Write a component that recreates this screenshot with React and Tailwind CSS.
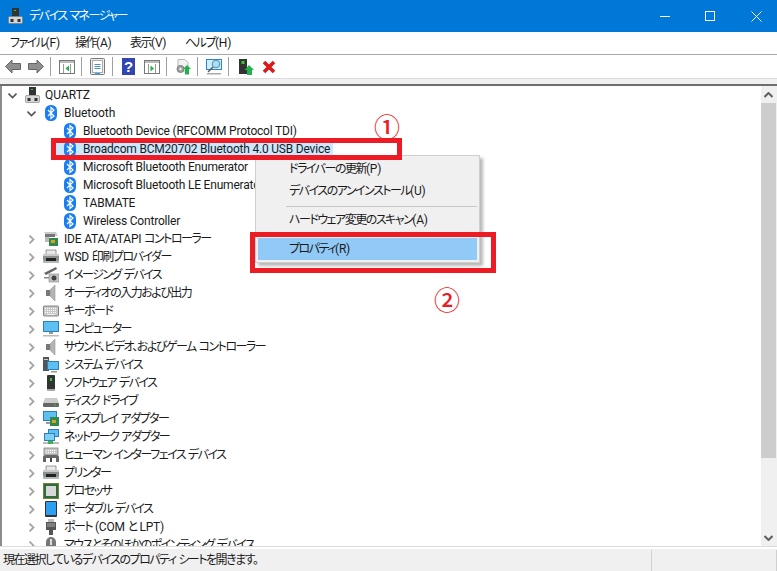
const font = { fontFamily: 'Roboto, "Noto Sans CJK JP", sans-serif' }

// kana and kanji in the reference run narrower than the Latin, so they get their own span
function Label({ text }) {
  const parts = text.split(/([\u3000-\u9fff\uff00-\uffef]+)/)
  return parts.map((p, i) => i % 2
    ? <span key={i} className="tracking-[-1.5px] [font-feature-settings:'palt']">{p}</span>
    : <span key={i} className="tracking-[-0.2px]">{p}</span>)
}

function Chevron({ open }) {
  return (
    <svg width="9" height="9" viewBox="0 0 9 9" className="shrink-0">
      {open
        ? <path d="M0.5 2.5 L4.5 6.5 L8.5 2.5" fill="none" stroke="#555" strokeWidth="1.6" />
        : <path d="M2.5 0.5 L6.5 4.5 L2.5 8.5" fill="none" stroke="#a6a6a6" strokeWidth="1.8" />}
    </svg>
  )
}

function Bt() {
  return (
    <svg width="12" height="16" viewBox="0 0 12 16">
      <rect x="0" y="0" width="12" height="16" rx="5.5" fill="#1a7ef0" />
      <path d="M3 5 L9 11 L6 13.5 V2.5 L9 5 L3 11" fill="none" stroke="#fff" strokeWidth="1.2" />
    </svg>
  )
}

function Computer() {
  return (
    <svg width="15" height="16" viewBox="0 0 15 16">
      <rect x="4" y="0" width="7" height="8" fill="#333" />
      <rect x="6" y="2" width="2" height="1" fill="#3c3" />
      <rect x="0.5" y="8.5" width="14" height="7" rx="1" fill="#d6d6d6" stroke="#777" strokeWidth="0.6" />
      <rect x="2.5" y="11" width="3" height="3" fill="#333" />
      <rect x="9.5" y="11" width="3" height="3" fill="#333" />
    </svg>
  )
}

function DevIcon({ kind }) {
  const box = { width: 16, height: 16, viewBox: '0 0 16 16' }
  switch (kind) {
    case 'ide':
      return <svg {...box}><path d="M1 1 H13 L15 5 H3 Z" fill="#ccc" /><rect x="2" y="3" width="10" height="3" fill="#777" /><rect x="6" y="7" width="9" height="8" fill="#2f8a4e" /><rect x="8" y="9" width="4" height="3" fill="#d9a520" /><rect x="2" y="6" width="4" height="5" fill="#bbb" /></svg>
    case 'printer':
      return <svg {...box}><rect x="3" y="1" width="10" height="5" fill="#e8e8e8" stroke="#777" strokeWidth="0.7" /><rect x="0" y="5" width="16" height="7" rx="1" fill="#8a9090" /><rect x="0" y="5" width="16" height="2" fill="#c8cccc" /><rect x="3" y="9" width="10" height="3" fill="#222" /><rect x="0" y="12" width="16" height="2" fill="#b4b8b8" /></svg>
    case 'camera':
      return <svg {...box}><path d="M1 6 L13 0 L14 2 L3 8 Z" fill="#666" /><rect x="6" y="7" width="10" height="8" fill="#c4c4c4" stroke="#777" strokeWidth="0.5" /><circle cx="11" cy="11" r="2.5" fill="#444" /><rect x="1" y="10" width="5" height="1.5" fill="#888" /></svg>
    case 'speaker':
      return <svg {...box}><rect x="3" y="5" width="4" height="6" fill="#777" /><path d="M7 5 L12 0 V16 L7 11 Z" fill="#b4b4b4" stroke="#888" strokeWidth="0.5" /></svg>
    case 'keyboard':
      return <svg {...box}><rect x="0.5" y="3" width="15" height="10" rx="1" fill="#c8c8c8" stroke="#6a6a6a" strokeWidth="0.8" /><path d="M2 5.5 H14 M2 7.5 H14 M2 9.5 H14" stroke="#fff" strokeWidth="1" strokeDasharray="1 1" /><rect x="4" y="11" width="8" height="1" fill="#f0f0f0" /></svg>
    case 'monitor':
      return <svg {...box}><rect x="0" y="0" width="16" height="11" fill="#2c7fb8" /><rect x="1" y="1" width="14" height="9" fill="#5dc0f0" /><rect x="6" y="11" width="4" height="2" fill="#999" /><rect x="0" y="14" width="16" height="1.5" fill="#bbb" /></svg>
    case 'system':
      return <svg {...box}><rect x="0" y="0" width="6" height="14" fill="#555" /><rect x="1" y="2" width="4" height="1" fill="#ccc" /><rect x="4" y="4" width="12" height="9" fill="#2c7fb8" /><rect x="5" y="5" width="10" height="7" fill="#5dc0f0" /><rect x="8" y="14" width="6" height="1.5" fill="#999" /></svg>
    case 'software':
      return <svg {...box}><rect x="4" y="0" width="8" height="15" rx="1" fill="#333" /><rect x="7" y="3" width="2" height="3" fill="#3c3" /><rect x="4" y="14" width="8" height="2" fill="#aaa" /></svg>
    case 'disk':
      return <svg {...box}><path d="M2 5 H14 L16 10 H0 Z" fill="#ccc" /><rect x="0" y="10" width="16" height="4" rx="1" fill="#666" /><rect x="11" y="11.5" width="2" height="1" fill="#3c3" /></svg>
    case 'display':
      return <svg {...box}><rect x="0" y="0" width="14" height="10" fill="#2c7fb8" /><rect x="1" y="1" width="12" height="8" fill="#5dc0f0" /><rect x="7" y="6" width="9" height="9" fill="#2f8a4e" /><rect x="9" y="9" width="4" height="3" fill="#d9a520" /><rect x="3" y="11" width="4" height="2" fill="#999" /></svg>
    case 'network':
      return <svg {...box}><rect x="5" y="0" width="11" height="8" fill="#2c7fb8" /><rect x="6" y="1" width="9" height="6" fill="#5dc0f0" /><rect x="1" y="4" width="11" height="8" fill="#2c7fb8" /><rect x="2" y="5" width="9" height="6" fill="#7dd0f5" /><rect x="0" y="13" width="16" height="2" fill="#bbb" /><rect x="5" y="12" width="5" height="3" fill="#3bb54a" /></svg>
    case 'hid':
      return <svg {...box}><rect x="1" y="1" width="14" height="7" fill="#c8c8c8" stroke="#777" strokeWidth="0.7" /><path d="M3 3.5 H13 M3 5.5 H13" stroke="#fff" strokeDasharray="1 1" /><path d="M0 15 V10 Q0 8 3 8 H13 Q16 8 16 10 V15 H13 V11 H3 V15 Z" fill="#666" /><rect x="7" y="11" width="2" height="4" fill="#444" /></svg>
    case 'cpu':
      return <svg {...box}><rect x="0" y="0" width="16" height="16" fill="#2f6b3a" /><rect x="0.5" y="0.5" width="15" height="15" fill="none" stroke="#b99a3a" strokeWidth="1" strokeDasharray="1 1" /><rect x="3" y="3" width="10" height="10" fill="#d8d8d8" /></svg>
    case 'portable':
      return <svg {...box}><rect x="2" y="0" width="12" height="16" rx="1" fill="#333" /><rect x="3" y="1" width="10" height="13" fill="#2e9ff0" /></svg>
    case 'port':
      return <svg {...box}><rect x="5" y="0" width="6" height="3" fill="#bbb" /><rect x="3" y="3" width="10" height="8" fill="#555" /><path d="M4 5 H12 M4 7 H12" stroke="#aaa" /><rect x="6" y="11" width="4" height="5" fill="#555" /></svg>
    case 'mouse':
      return <svg {...box}><rect x="3" y="0" width="10" height="16" rx="5" fill="#777" /><rect x="7" y="2" width="2" height="6" fill="#ddd" /></svg>
    default:
      return null
  }
}

const devices = [
  ['ide', 'IDE ATA/ATAPI コントローラー'],
  ['printer', 'WSD 印刷プロバイダー'],
  ['camera', 'イメージング デバイス'],
  ['speaker', 'オーディオの入力および出力'],
  ['keyboard', 'キーボード'],
  ['monitor', 'コンピューター'],
  ['speaker', 'サウンド、ビデオ、およびゲーム コントローラー'],
  ['system', 'システム デバイス'],
  ['software', 'ソフトウェア デバイス'],
  ['disk', 'ディスク ドライブ'],
  ['display', 'ディスプレイ アダプター'],
  ['network', 'ネットワーク アダプター'],
  ['hid', 'ヒューマン インターフェイス デバイス'],
  ['printer', 'プリンター'],
  ['cpu', 'プロセッサ'],
  ['portable', 'ポータブル デバイス'],
  ['port', 'ポート (COM と LPT)'],
  ['mouse', 'マウスとそのほかのポインティング デバイス'],
]

const bluetooth = [
  'Bluetooth Device (RFCOMM Protocol TDI)',
  'Broadcom BCM20702 Bluetooth 4.0 USB Device',
  'Microsoft Bluetooth Enumerator',
  'Microsoft Bluetooth LE Enumerator',
  'TABMATE',
  'Wireless Controller',
]

function Sep({ className }) {
  return <div className={`w-px h-[19px] bg-[#a0a0a0] shrink-0 ${className}`} />
}

function Toolbar() {
  const win = { width: 16, height: 14, viewBox: '0 0 16 14' }
  return (
    <div className="h-[23px] bg-white flex items-center pl-[5px] shrink-0">
      <svg width="16" height="15" viewBox="0 0 16 15"><path d="M0.5 7.5 L7 1 V4.5 H15.5 V10.5 H7 V14 Z" fill="#8f8f8f" stroke="#666" /></svg>
      <svg width="16" height="15" viewBox="0 0 16 15" className="ml-[7px]"><path d="M15.5 7.5 L9 1 V4.5 H0.5 V10.5 H9 V14 Z" fill="#8f8f8f" stroke="#666" /></svg>
      <Sep className="ml-[6px]" />
      <svg {...win} className="ml-[8px]"><rect x="0.5" y="0.5" width="15" height="13" fill="#fff" stroke="#777" /><rect x="1" y="1" width="14" height="2" fill="#bbb" /><path d="M4.5 4 V13 M11.5 4 V13" stroke="#999" /><path d="M10 5.5 L6.5 8.5 L10 11.5 Z" fill="#2aa84a" /></svg>
      <Sep className="ml-[6px]" />
      <svg width="15" height="17" viewBox="0 0 15 17" className="ml-[8px]"><rect x="0.5" y="0.5" width="14" height="16" rx="1" fill="#eee" stroke="#777" /><rect x="2.5" y="2.5" width="10" height="12" fill="#fff" stroke="#aaa" /><path d="M4.5 6.5 H10.5 M4.5 8.5 H10.5 M4.5 10.5 H10.5" stroke="#4a90c0" /><rect x="5" y="15" width="5" height="1.5" fill="#3aa0e8" /></svg>
      <Sep className="ml-[7px]" />
      <svg width="13" height="17" viewBox="0 0 13 17" className="ml-[9px]">
        <rect width="13" height="17" fill="#3346b0" />
        <text x="6.5" y="14" textAnchor="middle" fontSize="15" fontWeight="700" fill="#fff" fontFamily="Liberation Sans">?</text>
      </svg>
      <svg {...win} className="ml-[9px]"><rect x="0.5" y="0.5" width="15" height="13" fill="#fff" stroke="#777" /><rect x="1" y="1" width="14" height="2" fill="#bbb" /><path d="M4.5 4 V13 M11.5 4 V13" stroke="#999" /><path d="M6.5 5.5 L10 8.5 L6.5 11.5 Z" fill="#2aa84a" /></svg>
      <Sep className="ml-[6px]" />
      <svg width="16" height="16" viewBox="0 0 16 16" className="ml-[8px]"><path d="M3 0.5 H10 L13 3.5 V12 H3 Z" fill="#f2f2f2" stroke="#b5b5b5" /><circle cx="5.5" cy="10" r="3.5" fill="#a0a0a0" stroke="#808080" /><circle cx="5.5" cy="10" r="1.2" fill="#eee" /><path d="M12 6 L16 10 H14 V15.5 H10 V10 H8 Z" fill="#22b14c" /></svg>
      <Sep className="ml-[6px]" />
      <svg width="16" height="16" viewBox="0 0 16 16" className="ml-[8px]"><rect x="0" y="0" width="16" height="11" fill="#2c88c8" /><rect x="1" y="1" width="14" height="9" fill="#cfeefc" /><circle cx="10" cy="5" r="3.8" fill="#a8def8" stroke="#5f8aa0" /><path d="M7 8 L2 13" stroke="#555" strokeWidth="1.5" /><rect x="1" y="14" width="14" height="1.5" fill="#aaa" /></svg>
      <Sep className="ml-[6px]" />
      <svg width="16" height="16" viewBox="0 0 16 16" className="ml-[10px]"><rect x="0" y="0" width="8" height="15" fill="#333" /><rect x="2.5" y="2" width="3" height="3" fill="#3c3" /><path d="M10 6 L15 11 H13 V16 H8 V11 H5.5 Z" fill="#22b14c" /></svg>
      <svg width="14" height="14" viewBox="0 0 14 14" className="ml-[7px]"><path d="M2 2 L12 12 M12 2 L2 12" stroke="#d91a1a" strokeWidth="3.6" /></svg>
    </div>
  )
}

function Row({ indent, chevron, icon, selected, children }) {
  return (
    <div className="h-[18px] flex items-center shrink-0 whitespace-nowrap" style={{ paddingLeft: indent }}>
      <span className="w-[19px] flex items-center justify-start pl-[3px] shrink-0">{chevron}</span>
      <div className={`flex items-center h-[18px] ${selected ? 'bg-[#cce8ff] -ml-[6px] pl-[6px] pr-[3px]' : ''}`}>
        <span className="w-[16px] flex items-center justify-center shrink-0">{icon}</span>
        {children}
      </div>
    </div>
  )
}

function ContextMenu() {
  return (
    <div className="absolute left-[255px] top-[155px] w-[225px] h-[108px] bg-[#f0f0f0] border border-[#cfcfcf] shadow-[3px_3px_3px_rgba(0,0,0,0.28)] text-[12px] text-[#1a1a1a]">
      <div className="absolute left-[33px] top-[2px] h-[22px] flex items-center whitespace-nowrap"><Label text="ドライバーの更新(P)" /></div>
      <div className="absolute left-[33px] top-[24px] h-[22px] flex items-center whitespace-nowrap"><Label text="デバイスのアンインストール(U)" /></div>
      <div className="absolute left-[30px] right-[2px] top-[50px] h-px bg-[#c8c8c8]" />
      <div className="absolute left-[33px] top-[53px] h-[22px] flex items-center whitespace-nowrap"><Label text="ハードウェア変更のスキャン(A)" /></div>
      <div className="absolute left-[2px] right-[2px] top-[82px] h-[22px] pl-[31px] flex items-center bg-[#91c9f7] whitespace-nowrap"><Label text="プロパティ(R)" /></div>
    </div>
  )
}

export default function App() {
  return (
    <div className="relative w-[777px] h-[571px] overflow-hidden bg-white flex flex-col text-[12px] text-[#1a1a1a]" style={font}>
      {/* title bar */}
      <div className="h-[32px] bg-[#0078d7] flex items-center shrink-0 text-white">
        <div className="ml-[8px]"><Computer /></div>
        <span className="ml-[6px]"><Label text="デバイス マネージャー" /></span>
        <div className="ml-auto flex items-center">
          <div className="w-[10px] h-px bg-white mr-[35px]" />
          <div className="w-[10px] h-[10px] border border-white mr-[36px]" />
          <svg width="11" height="11" viewBox="0 0 11 11" className="mr-[15px]"><path d="M0.5 0.5 L10.5 10.5 M10.5 0.5 L0.5 10.5" stroke="#fff" /></svg>
        </div>
      </div>

      {/* menu */}
      <div className="h-[22px] bg-white flex items-center pl-[10px] shrink-0">
        <span className="w-[65px]"><Label text="ファイル(F)" /></span>
        <span className="w-[55px]"><Label text="操作(A)" /></span>
        <span className="w-[55px]"><Label text="表示(V)" /></span>
        <span><Label text="ヘルプ(H)" /></span>
      </div>
      <div className="h-px bg-[#a9a9a9] shrink-0" />
      <Toolbar />
      <div className="h-[6px] bg-[#f0f0f0] border-t border-[#dcdcdc] shrink-0" />
      <div className="h-[2px] bg-[#6e6e6e] shrink-0" />

      {/* tree */}
      <div className="flex-1 flex min-h-0">
        <div className="w-[2px] bg-[#8c8c8c] shrink-0" />
        <div className="flex-1 min-w-0 overflow-hidden pl-[3px]">
          <Row indent={0} chevron={<Chevron open />} icon={<Computer />}><span className="ml-[5px]">QUARTZ</span></Row>
          <Row indent={19} chevron={<Chevron open />} icon={<Bt />}><span className="ml-[5px]">Bluetooth</span></Row>
          {bluetooth.map((name, i) => (
            <Row key={name} indent={38} icon={<Bt />} selected={i === 1}>
              <span className="ml-[5px] tracking-[-0.2px]">{name}</span>
            </Row>
          ))}
          {devices.map(([kind, label], i) => (
            <Row key={i} indent={19} chevron={<Chevron />} icon={<DevIcon kind={kind} />}>
              <span className="ml-[5px]"><Label text={label} /></span>
            </Row>
          ))}
        </div>
        <div className="w-[16px] shrink-0 bg-[#f0f0f0] flex flex-col">
          <div className="h-[17px] flex items-center justify-center pr-px">
            <svg width="9" height="6" viewBox="0 0 9 6"><path d="M0.5 5 L4.5 1 L8.5 5" fill="none" stroke="#606060" strokeWidth="2" /></svg>
          </div>
          <div className="h-[355px] w-[15px] bg-[#cdcdcd]" />
          <div className="mt-auto h-[17px] flex items-center justify-center pr-px">
            <svg width="9" height="6" viewBox="0 0 9 6"><path d="M0.5 1 L4.5 5 L8.5 1" fill="none" stroke="#606060" strokeWidth="2" /></svg>
          </div>
        </div>
      </div>

      {/* status bar */}
      <div className="h-[25px] bg-[#f0f0f0] border-t border-[#dcdcdc] shrink-0 flex flex-col">
        <div className="h-[2px] bg-white shrink-0" />
        <div className="flex-1 flex items-center pl-[3px]">
          <span className="flex-1"><Label text="現在選択しているデバイスのプロパティ シートを開きます。" /></span>
          <div className="w-px h-[21px] bg-[#d0d0d0] mr-[124px]" />
          <div className="w-px h-[21px] bg-[#d0d0d0]" />
        </div>
      </div>

      <ContextMenu />

      {/* annotations */}
      <div className="absolute left-[51px] top-[138px] w-[351px] h-[22px] border-[5px] border-[#ed1c24]" />
      <div className="absolute left-[250px] top-[232px] w-[246px] h-[41px] border-[5px] border-[#ed1c24]" />
      <div className="absolute left-[374px] top-[114px] text-[26px] leading-[28px] font-medium text-[#ed1c24]">①</div>
      <div className="absolute left-[434px] top-[287px] text-[26px] leading-[28px] font-medium text-[#ed1c24]">②</div>
    </div>
  )
}
